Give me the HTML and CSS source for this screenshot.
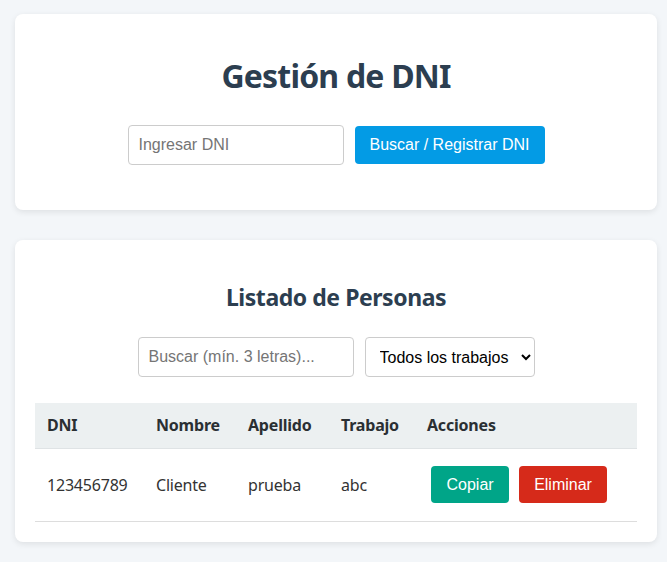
FILE: index.html
```html
<!DOCTYPE html>
<html lang="es">
<head>
<meta charset="utf-8">
<title>Gestión de DNI</title>
<link rel="stylesheet" href="styles.css">
</head>
<body>
  <section class="card card-top">
    <h1 class="title">Gestión de DNI</h1>
    <div class="form-row">
      <input class="field field-dni" type="text" placeholder="Ingresar DNI">
      <button class="btn btn-blue">Buscar / Registrar DNI</button>
    </div>
  </section>

  <section class="card card-list">
    <h2 class="subtitle">Listado de Personas</h2>
    <div class="form-row filter-row">
      <input class="field field-search" type="text" placeholder="Buscar (mín. 3 letras)...">
      <select class="field field-select">
        <option>Todos los trabajos</option>
      </select>
    </div>
    <table class="people">
      <thead>
        <tr>
          <th class="c-dni">DNI</th>
          <th class="c-nombre">Nombre</th>
          <th class="c-apellido">Apellido</th>
          <th class="c-trabajo">Trabajo</th>
          <th class="c-acciones">Acciones</th>
        </tr>
      </thead>
      <tbody>
        <tr>
          <td>123456789</td>
          <td>Cliente</td>
          <td>prueba</td>
          <td>abc</td>
          <td class="actions"><button class="btn btn-small btn-green">Copiar</button><button class="btn btn-small btn-red">Eliminar</button></td>
        </tr>
      </tbody>
    </table>
  </section>
</body>
</html>
```

FILE: styles.css
```css
html, body {
  margin: 0;
  padding: 0;
}

body {
  background: #f3f6f9;
  padding: 14px 10px 20px 15px;
  font-family: "Noto Sans", "Open Sans", sans-serif;
  color: #333333;
}

.card {
  background: #ffffff;
  border-radius: 8px;
  box-shadow: 0 2px 6px rgba(0, 0, 0, 0.09);
}

.card-top {
  padding: 42px 20px 45px;
  margin-bottom: 30px;
}

.card-list {
  padding: 41px 20px 20px;
}

.title {
  margin: 0 0 29px;
  font-size: 32px;
  line-height: 40px;
  font-weight: 700;
  letter-spacing: -0.8px;
  color: #2c3e50;
  text-align: center;
}

.subtitle {
  margin: 0 0 24px;
  font-size: 23px;
  line-height: 32px;
  font-weight: 700;
  letter-spacing: -0.45px;
  color: #2c3e50;
  text-align: center;
}

.form-row {
  display: flex;
  justify-content: center;
  align-items: center;
  gap: 11px;
}

.filter-row {
  margin-bottom: 26px;
}

.field {
  box-sizing: border-box;
  height: 40px;
  padding: 0 10px;
  border: 1px solid #cccccc;
  border-radius: 4px;
  font-family: "Liberation Sans", Arial, sans-serif;
  font-size: 16px;
  color: #000000;
  background: #ffffff;
}

.field::placeholder {
  color: #757575;
}

.field-dni,
.field-search {
  width: 216px;
}

.field-select {
  width: 170px;
  padding: 0 6px 0 10px;
}

.btn {
  border: none;
  border-radius: 4px;
  color: #ffffff;
  font-family: "Liberation Sans", Arial, sans-serif;
  font-size: 16px;
  cursor: pointer;
}

.btn-blue {
  background: #039be5;
  height: 38px;
  width: 190px;
  padding: 0;
}

.btn-small {
  height: 37px;
  padding: 0 15px;
  margin: 5px 5px 5px 4px;
  vertical-align: middle;
}

.btn-small + .btn-small {
  margin-left: 5px;
}

.btn-green {
  background: #00a588;
  padding: 0 15.5px;
}

.btn-red {
  background: #d62a1a;
}

.people {
  width: 100%;
  border-collapse: collapse;
  font-size: 16px;
  letter-spacing: -0.2px;
}

.people th {
  background: #ecf0f1;
  text-align: left;
  font-weight: 700;
  color: #2a2f33;
  padding: 12px;
  line-height: 21px;
  border-bottom: 1px solid #dfe3e5;
}

.people td {
  padding: 12px 12px 13px;
  line-height: 22px;
  border-bottom: 1px solid #dddddd;
  color: #333333;
}

.people td.actions {
  padding-top: 12px;
  padding-bottom: 13px;
  letter-spacing: 0;
}

.c-dni { width: 85px; }
.c-nombre { width: 68px; }
.c-apellido { width: 69px; }
.c-trabajo { width: 62px; }
```
